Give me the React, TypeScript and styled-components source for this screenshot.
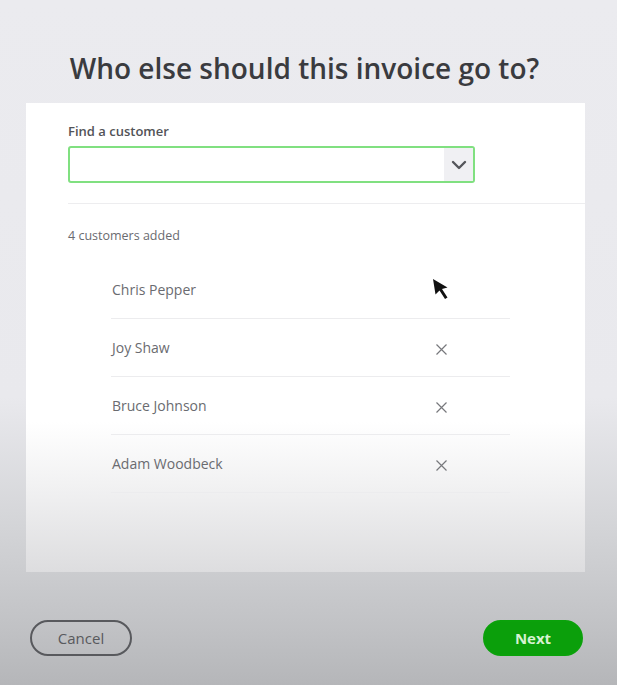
import React from "react";
import styled, { createGlobalStyle } from "styled-components";

const Global = createGlobalStyle`
  html, body { margin: 0; padding: 0; }
  body {
    font-family: "Open Sans", Lato, "Liberation Sans", sans-serif;
    background: linear-gradient(180deg, #ebebef 0%, #e9e9ed 58%, #d2d3d6 78%, #c3c4c7 90%, #b5b6b9 100%);
    min-height: 685px;
  }
`;

const Page = styled.div`
  position: relative;
  height: 685px;
  display: flex;
  flex-direction: column;
  padding: 52px 32px 0 26px;
  box-sizing: border-box;
`;

const Title = styled.h1`
  margin: 0 0 19px;
  font-size: 28px;
  line-height: 32px;
  font-weight: 600;
  color: #3a3b3f;
  text-align: center;
  padding-right: 2px;
`;

const Card = styled.div`
  height: 469px;
  background: linear-gradient(180deg, #ffffff 0%, #ffffff 68%, #f1f1f2 82%, #dddddf 100%);
  padding: 20px 0 0 42px;
  box-sizing: border-box;
`;

const Label = styled.div`
  font-size: 13px;
  line-height: 16px;
  font-weight: 600;
  color: #525357;
  margin-bottom: 7px;
`;

const Combo = styled.div`
  width: 407px;
  height: 37px;
  box-sizing: border-box;
  border: 2px solid #80e080;
  border-radius: 3px;
  display: flex;
  justify-content: flex-end;
  overflow: hidden;
`;

const Toggle = styled.div`
  width: 29px;
  background: #f0f0f3;
  display: flex;
  align-items: center;
  justify-content: center;
`;

const Divider = styled.div`
  height: 1px;
  background: #ededef;
  margin: 20px 0 24px;
`;

const Count = styled.div`
  font-size: 12.5px;
  line-height: 16px;
  color: #6a6b70;
  margin-bottom: 17px;
`;

const List = styled.div`
  margin-left: 43px;
  width: 399px;
`;

const Row = styled.div`
  height: 58px;
  box-sizing: border-box;
  border-bottom: 1px solid #ececee;
  display: flex;
  align-items: center;
  justify-content: space-between;
  padding: 0 63px 0 1px;
`;

const Name = styled.span`
  font-size: 14px;
  color: #6a6b70;
`;

const Remove = styled.span`
  width: 11px;
  height: 11px;
  display: flex;
  margin-top: 4px;
`;

const Footer = styled.div`
  display: flex;
  justify-content: space-between;
  align-items: center;
  margin-top: 48px;
  padding: 0 2px 0 4px;
`;

const Button = styled.button<{ $primary?: boolean }>`
  height: 36px;
  width: ${(p) => (p.$primary ? "100px" : "102px")};
  border-radius: 18px;
  box-sizing: border-box;
  font-family: "Open Sans", Lato, sans-serif;
  font-size: 15px;
  font-weight: ${(p) => (p.$primary ? 700 : 500)};
  cursor: pointer;
  border: 2px solid ${(p) => (p.$primary ? "#0ba10b" : "#58595d")};
  background: ${(p) => (p.$primary ? "#0b9f0b" : "transparent")};
  color: ${(p) => (p.$primary ? "#d6f2d2" : "#58595d")};
`;

const Cursor = styled.svg`
  position: absolute;
  left: 432px;
  top: 278px;
  pointer-events: none;
`;

const customers = [
  { name: "Chris Pepper", removable: false },
  { name: "Joy Shaw", removable: true },
  { name: "Bruce Johnson", removable: true },
  { name: "Adam Woodbeck", removable: true },
];

export default function App() {
  return (
    <>
      <Global />
      <Page>
        <Title>Who else should this invoice go to?</Title>
        <Card>
          <Label>Find a customer</Label>
          <Combo>
            <Toggle>
              <svg width="16" height="10" viewBox="0 0 16 10">
                <path d="M2 2 L8 8 L14 2" fill="none" stroke="#55565a" strokeWidth="2.4" strokeLinecap="round" strokeLinejoin="round" />
              </svg>
            </Toggle>
          </Combo>
          <Divider />
          <Count>4 customers added</Count>
          <List>
            {customers.map((c) => (
              <Row key={c.name}>
                <Name>{c.name}</Name>
                {c.removable && (
                  <Remove>
                    <svg width="11" height="11" viewBox="0 0 11 11">
                      <path d="M0.5 0.5 L10.5 10.5 M10.5 0.5 L0.5 10.5" stroke="#77787c" strokeWidth="1.2" />
                    </svg>
                  </Remove>
                )}
              </Row>
            ))}
          </List>
        </Card>
        <Footer>
          <Button>Cancel</Button>
          <Button $primary>Next</Button>
        </Footer>
        <Cursor width="22" height="24" viewBox="0 0 22 24">
          <path d="M1 1 L3.5 16.5 L7.5 12.5 L13 21 L15.5 19.5 L10 11 L15.5 9.5 Z" fill="#111" />
        </Cursor>
      </Page>
    </>
  );
}
